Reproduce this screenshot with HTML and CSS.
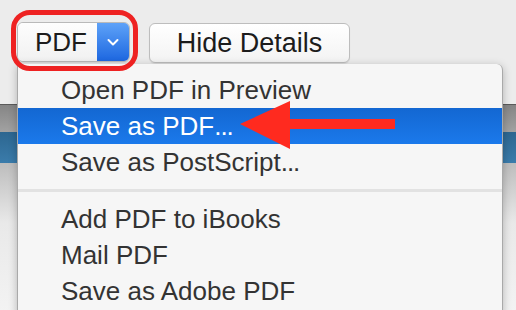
FILE: index.html
```html
<!DOCTYPE html>
<html lang="en">
<head>
    <meta charset="UTF-8">
    <title>Print - PDF menu</title>
    <link rel="stylesheet" href="styles.css">
</head>
<body>
    <div class="toolbar">
        <div class="pdf-button">
            <span class="pdf-label">PDF</span>
            <span class="pdf-arrow">
                <svg width="14" height="9" viewBox="0 0 14 9"><path d="M2.5 2 L7 6.5 L11.5 2" fill="none" stroke="#fff" stroke-width="2" stroke-linecap="round" stroke-linejoin="round"/></svg>
            </span>
        </div>
        <button class="details-button">Hide Details</button>
    </div>

    <!-- window contents behind the menu -->
    <div class="backdrop">
        <div class="band-gray"></div>
        <div class="band-blue"></div>
        <div class="band-light"></div>
    </div>

    <!-- dropdown menu -->
    <div class="menu">
        <div class="menu-item">Open PDF in Preview</div>
        <div class="menu-item selected">Save as PDF<span class="dots">...</span></div>
        <div class="menu-item">Save as PostScript<span class="dots">...</span></div>
        <div class="menu-separator"></div>
        <div class="menu-item">Add PDF to iBooks</div>
        <div class="menu-item">Mail PDF</div>
        <div class="menu-item">Save as Adobe PDF</div>
    </div>

    <!-- annotations -->
    <div class="ring"></div>
    <svg class="arrow" width="160" height="52" viewBox="0 0 160 52">
        <polygon points="0,23 50,0 50,18 155,18 155,28 50,28 50,48" fill="#ff2a1f"/>
    </svg>
</body>
</html>
```

FILE: styles.css
```css
* {
    box-sizing: border-box;
    margin: 0;
    padding: 0;
}

body {
    width: 516px;
    height: 310px;
    overflow: hidden;
    position: relative;
    background: #ececec;
    font-family: "Liberation Sans", Arial, sans-serif;
    color: #333;
}

/* Toolbar */
.toolbar {
    height: 104px;
    display: flex;
    align-items: flex-start;
    gap: 19px;
    padding: 22px 0 0 17px;
}

.pdf-button {
    display: flex;
    height: 40px;
    width: 113px;
    border: 1px solid #b9b9b9;
    border-radius: 6px;
    overflow: hidden;
    box-shadow: 0 1px 1px rgba(0, 0, 0, 0.08);
}

.pdf-label {
    flex: 1;
    display: flex;
    align-items: center;
    padding-left: 17px;
    font-size: 26px;
    color: #1c1c1c;
    background: linear-gradient(#fdfdfd, #f1f1f1);
}

.pdf-arrow {
    width: 32px;
    display: flex;
    align-items: center;
    justify-content: center;
    background: linear-gradient(#5ea2f8, #1d67e0);
}

.details-button {
    height: 40px;
    width: 201px;
    margin-top: 1px;
    border: 1px solid #bdbdbd;
    border-radius: 6px;
    background: linear-gradient(#ffffff, #f3f3f3);
    font-family: inherit;
    font-size: 27px;
    color: #1c1c1c;
    box-shadow: 0 1px 1px rgba(0, 0, 0, 0.08);
}

/* Window contents */
.backdrop {
    border-top: 1px solid #5a5a5a;
    display: flex;
    flex-direction: column;
}

.band-gray {
    height: 27px;
    background: linear-gradient(#858585, #a2a2a2);
}

.band-blue {
    height: 31px;
    background: linear-gradient(#2c6690, #3b7cab);
}

.band-light {
    height: 150px;
    background: linear-gradient(#bdbdbd, #e9e9e9 40%, #f3f3f3);
}

/* Dropdown menu */
.menu {
    position: absolute;
    top: 64px;
    left: 17px;
    width: 486px;
    height: 260px;
    padding-top: 8px;
    background: #f6f6f6;
    border: 1px solid #a9a9a9;
    border-top: none;
    border-radius: 0 6px 0 0;
    box-shadow: 0 2px 8px rgba(0, 0, 0, 0.25);
}

.menu-item {
    height: 36px;
    display: flex;
    align-items: center;
    padding-left: 43px;
    font-size: 26px;
    color: #333;
}

.menu-item .dots {
    letter-spacing: -1px;
}

.menu-item.selected {
    color: #fff;
    background: linear-gradient(#1367d2, #1b79eb);
}

.menu-separator {
    height: 21px;
    display: flex;
    align-items: center;
}

.menu-separator::after {
    content: "";
    display: block;
    width: 100%;
    height: 3px;
    background: #e2e2e2;
}

/* Annotations */
.ring {
    position: absolute;
    top: 10px;
    left: 11px;
    width: 127px;
    height: 61px;
    border: 5px solid #ee2222;
    border-radius: 19px;
}

.arrow {
    position: absolute;
    left: 240px;
    top: 101px;
}
```
